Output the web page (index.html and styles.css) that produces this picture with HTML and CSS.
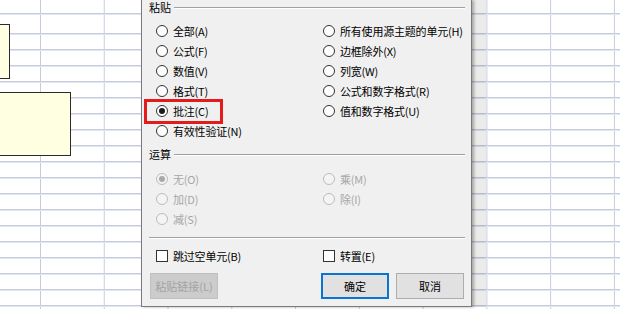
FILE: index.html
```html
<!DOCTYPE html>
<html lang="zh-CN">
<head>
    <meta charset="UTF-8">
    <meta name="viewport" content="width=device-width, initial-scale=1.0">
    <title>选择性粘贴</title>
    <link rel="stylesheet" href="styles.css">
</head>
<body>
    <div class="sheet">
        <div class="rows"></div>
    </div>
    <div class="note note-small"></div>
    <div class="note note-big"></div>

    <div class="dialog">
        <div class="group-title"><span>粘贴</span></div>
        <div class="options">
            <label class="radio"><span class="circle"></span>全部(A)</label>
            <label class="radio"><span class="circle"></span>所有使用源主题的单元(H)</label>
            <label class="radio"><span class="circle"></span>公式(F)</label>
            <label class="radio"><span class="circle"></span>边框除外(X)</label>
            <label class="radio"><span class="circle"></span>数值(V)</label>
            <label class="radio"><span class="circle"></span>列宽(W)</label>
            <label class="radio"><span class="circle"></span>格式(T)</label>
            <label class="radio"><span class="circle"></span>公式和数字格式(R)</label>
            <label class="radio"><span class="circle checked"></span>批注(C)</label>
            <label class="radio"><span class="circle"></span>值和数字格式(U)</label>
            <label class="radio"><span class="circle"></span>有效性验证(N)</label>
        </div>
        <div class="highlight"></div>

        <div class="group-title second"><span>运算</span></div>
        <div class="options ops">
            <label class="radio disabled"><span class="circle checked"></span>无(O)</label>
            <label class="radio disabled"><span class="circle"></span>乘(M)</label>
            <label class="radio disabled"><span class="circle"></span>加(D)</label>
            <label class="radio disabled"><span class="circle"></span>除(I)</label>
            <label class="radio disabled"><span class="circle"></span>减(S)</label>
        </div>

        <div class="separator"></div>

        <div class="options checks">
            <label class="radio"><span class="box"></span>跳过空单元(B)</label>
            <label class="radio"><span class="box"></span>转置(E)</label>
        </div>

        <div class="buttons">
            <button class="btn" disabled>粘贴链接(L)</button>
            <div class="actions">
                <button class="btn default">确定</button>
                <button class="btn">取消</button>
            </div>
        </div>
    </div>
</body>
</html>
```

FILE: styles.css
```css
html, body {
    margin: 0;
    padding: 0;
    width: 620px;
    height: 309px;
    overflow: hidden;
    background: #ffffff;
    font-family: "Noto Sans CJK SC", "Noto Sans", sans-serif;
    font-size: 11px;
    color: #000000;
}

/* spreadsheet behind the dialog */
.sheet {
    height: 309px;
    box-sizing: border-box;
    padding-top: 33px;
    background:
        linear-gradient(to bottom, transparent 13px, #c5cddd 13px, #c5cddd 14px, #e2e6ef 14px, #e2e6ef 15px, transparent 15px) no-repeat,
        linear-gradient(to right, #c5cddd 0, #c5cddd 1px, transparent 1px) 40px 0 / 63.78px 100% repeat-x;
}
.rows {
    height: 276px;
    background: linear-gradient(to bottom, #c5cddd 0, #c5cddd 1px, #e2e6ef 1px, #e2e6ef 2px, transparent 2px) 0 0 / 100% 16px repeat-y;
}

.note {
    position: absolute;
    background: #ffffe1;
    border: 1px solid #2b2b2b;
}
.note-small {
    left: -1px;
    top: 24px;
    width: 9px;
    height: 53px;
}
.note-big {
    left: -1px;
    top: 92px;
    width: 70px;
    height: 62px;
}

/* dialog window */
.dialog {
    position: absolute;
    left: 141px;
    top: 0;
    width: 331px;
    box-sizing: border-box;
    background: #f0f0f0;
    border: 1px solid #7a7a7a;
    border-top: none;
    padding: 0 6px 7px 7px;
    box-shadow: 2px 0 3px rgba(0, 0, 0, 0.3), 14px 0 0 rgba(0, 0, 0, 0.08);
}

.group-title {
    display: flex;
    align-items: center;
    height: 15px;
    line-height: 15px;
}
.group-title::after {
    content: '';
    flex: 1;
    margin-left: 3px;
    border-top: 1px solid #a0a0a0;
    border-bottom: 1px solid #ffffff;
}
.group-title.second {
    margin-top: 6px;
}

.options {
    display: grid;
    grid-template-columns: 167px 1fr;
    margin: 6px 0 0 7px;
}
.options.ops {
    margin-top: 7px;
}
.options.checks {
    margin-top: 7px;
}

.radio {
    display: flex;
    align-items: center;
    height: 20px;
    line-height: 20px;
    white-space: nowrap;
    letter-spacing: -0.2px;
}
.circle {
    width: 12px;
    height: 12px;
    box-sizing: border-box;
    border: 1px solid #333333;
    border-radius: 50%;
    background: #ffffff;
    margin-right: 5px;
    display: flex;
    align-items: center;
    justify-content: center;
}
.circle.checked::after {
    content: '';
    width: 6px;
    height: 6px;
    border-radius: 50%;
    background: #1a1a1a;
}
.box {
    width: 12px;
    height: 12px;
    box-sizing: border-box;
    border: 1px solid #333333;
    background: #ffffff;
    margin-right: 5px;
}

.radio.disabled {
    color: #a6a6a6;
}
.radio.disabled .circle {
    border-color: #bcbcbc;
    background: #f4f4f4;
}
.radio.disabled .circle.checked::after {
    background: #a8a8a8;
}

.highlight {
    position: absolute;
    left: 2px;
    top: 99px;
    width: 79px;
    height: 25px;
    box-sizing: border-box;
    border: 3px solid #e31b1b;
}

.separator {
    margin-top: 8px;
    border-top: 1px solid #a0a0a0;
    border-bottom: 1px solid #ffffff;
}

.buttons {
    display: flex;
    justify-content: space-between;
    margin: 7px 1px 0 1px;
}
.actions {
    display: flex;
    gap: 7px;
}
.btn {
    width: 68px;
    height: 26px;
    box-sizing: border-box;
    padding: 0;
    font-family: inherit;
    font-size: 11px;
    color: #000000;
    background: #e1e1e1;
    border: 1px solid #adadad;
}
.btn.default {
    border: 2px solid #0a74d1;
}
.btn:disabled {
    background: #cccccc;
    border-color: #bfbfbf;
    color: #a3a3a3;
}
```
